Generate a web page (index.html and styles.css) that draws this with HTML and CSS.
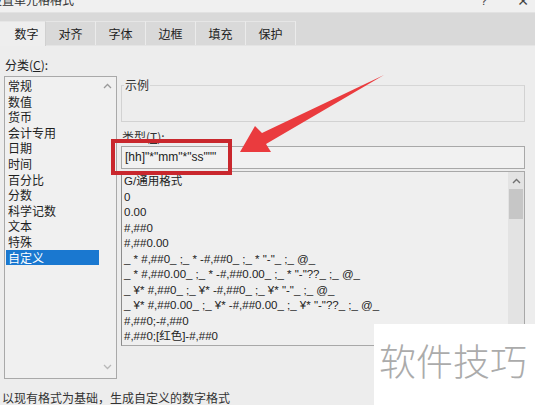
FILE: index.html
```html
<!DOCTYPE html>
<html lang="zh">
<head>
<meta charset="utf-8">
<link rel="stylesheet" href="styles.css">
</head>
<body>
<div class="dialog">
  <div class="titlebar">
    <span class="title">设置单元格格式</span>
    <span class="tb-btns"><span class="help">?</span><span class="close">✕</span></span>
  </div>
  <div class="tabstrip">
    <div class="tab active">数字</div>
    <div class="tab">对齐</div>
    <div class="tab">字体</div>
    <div class="tab">边框</div>
    <div class="tab">填充</div>
    <div class="tab">保护</div>
  </div>
  <div class="content">
    <div class="leftcol">
      <div class="label">分类(<u>C</u>):</div>
      <div class="catlist">
        <div class="items">
          <div class="item">常规</div>
          <div class="item">数值</div>
          <div class="item">货币</div>
          <div class="item">会计专用</div>
          <div class="item">日期</div>
          <div class="item">时间</div>
          <div class="item">百分比</div>
          <div class="item">分数</div>
          <div class="item">科学记数</div>
          <div class="item">文本</div>
          <div class="item">特殊</div>
          <div class="item sel">自定义</div>
        </div>
        <div class="lscroll">
          <svg width="9" height="6" viewBox="0 0 9 6"><path d="M1 5 L4.5 1.5 L8 5" fill="none" stroke="#9a9a9a" stroke-width="1.3"/></svg>
          <svg width="9" height="6" viewBox="0 0 9 6"><path d="M1 1 L4.5 4.5 L8 1" fill="none" stroke="#b8b8b8" stroke-width="1.3"/></svg>
        </div>
      </div>
    </div>
    <div class="rightcol">
      <fieldset class="sample">
        <legend>示例</legend>
      </fieldset>
      <div class="label typelabel">类型(<u>T</u>):</div>
      <div class="typeinput">[hh]"*"mm"*"ss"""</div>
      <div class="fmtlist">
        <div class="fitems">
          <div class="fitem">G/通用格式</div>
          <div class="fitem">0</div>
          <div class="fitem">0.00</div>
          <div class="fitem">#,##0</div>
          <div class="fitem">#,##0.00</div>
          <div class="fitem">_ * #,##0_ ;_ * -#,##0_ ;_ * "-"_ ;_ @_</div>
          <div class="fitem">_ * #,##0.00_ ;_ * -#,##0.00_ ;_ * "-"??_ ;_ @_</div>
          <div class="fitem">_ ¥* #,##0_ ;_ ¥* -#,##0_ ;_ ¥* "-"_ ;_ @_</div>
          <div class="fitem">_ ¥* #,##0.00_ ;_ ¥* -#,##0.00_ ;_ ¥* "-"??_ ;_ @_</div>
          <div class="fitem">#,##0;-#,##0</div>
          <div class="fitem">#,##0;[红色]-#,##0</div>
        </div>
        <div class="rscroll">
          <div class="rarrow"><svg width="9" height="6" viewBox="0 0 9 6"><path d="M1 5 L4.5 1.5 L8 5" fill="none" stroke="#707070" stroke-width="1.4"/></svg></div>
          <div class="thumb"></div>
        </div>
      </div>
    </div>
  </div>
  <div class="footer">以现有格式为基础，生成自定义的数字格式</div>

  <div class="redbox"></div>
  <svg class="arrow" width="535" height="405" viewBox="0 0 535 405">
    <polygon points="240,152 255,126 262,133 384,75 266,144 271,152" fill="#ea3b3e"/>
  </svg>
  <div class="watermark">软件技巧</div>
</div>
</body>
</html>
```

FILE: styles.css
```css
* { box-sizing: border-box; }
html, body {
  margin: 0;
  padding: 0;
  width: 535px;
  height: 405px;
  overflow: hidden;
  background: #ededed;
}
body {
  font-family: "Noto Sans CJK SC", "Liberation Sans", sans-serif;
  font-size: 12px;
  color: #1e1e1e;
}
.dialog {
  position: relative;
  width: 535px;
  height: 405px;
  overflow: hidden;
  background: #ededed;
}
.titlebar {
  height: 12px;
  background: #f0f0f0;
  display: flex;
  justify-content: space-between;
  overflow: hidden;
}
.title {
  margin-top: -8px;
  margin-left: -10px;
  line-height: 16px;
  font-size: 12px;
  color: #333;
}
.tb-btns {
  display: flex;
  margin-top: -7px;
  line-height: 16px;
  color: #444;
}
.help { margin-right: 30px; font-size: 12px; font-family: "Liberation Sans", sans-serif; }
.close { margin-right: 6px; font-size: 14px; font-family: "DejaVu Sans", sans-serif; }
.tabstrip {
  height: 34px;
  background: #d9d9d9;
  display: flex;
  align-items: flex-end;
  border-top: 1px solid #e2e2e2;
  border-bottom: 1px solid #e4e4e4;
}
.tab {
  width: 50px;
  height: 24px;
  line-height: 23px;
  text-align: center;
  border-right: 1px solid #ebebeb;
  border-top: 1px solid #e6e6e6;
  color: #222;
  font-size: 12px;
}
.tab.active {
  width: 46px;
  height: 25px;
  margin-bottom: -1px;
  background: #eeeeee;
  padding-left: 8px;
  border-right: 1px solid #d0d0d0;
}
.content {
  display: flex;
  height: 333px;
}
.leftcol {
  width: 121px;
  padding-left: 4px;
  padding-top: 11px;
}
.label {
  line-height: 16px;
  padding-left: 1px;
  color: #222;
}
.label u { text-decoration: underline; }
.catlist {
  margin-top: 3px;
  width: 113px;
  height: 303px;
  border: 1px solid #a9a9a9;
  background: #f0f0f0;
  display: flex;
}
.items {
  flex: 1;
  padding-top: 1px;
  padding-left: 1px;
}
.item {
  height: 15.6px;
  line-height: 15.6px;
  padding-left: 2px;
}
.item.sel {
  background: #1a78d0;
  color: #fff;
}
.lscroll {
  width: 17px;
  display: flex;
  flex-direction: column;
  justify-content: space-between;
  align-items: center;
  padding: 6px 0 8px;
}
.rightcol {
  width: 404px;
  padding-top: 32px;
}
.sample {
  margin: 0;
  padding: 0;
  height: 44px;
  border: 1px solid #d2d2d2;
  border-top-color: #d6d6d6;
  min-width: 0;
}
.sample legend {
  padding: 0 1px;
  margin-left: 2px;
  line-height: 14px;
  color: #333;
}
.typelabel {
  margin-top: 7px;
  color: #333;
}
.typeinput {
  margin-top: 1px;
  height: 23px;
  border: 1px solid #a8a8a8;
  background: #f1f1f1;
  line-height: 21px;
  padding-left: 3px;
  font-family: "Liberation Sans", sans-serif;
  font-size: 12px;
  color: #222;
}
.fmtlist {
  margin-top: 2px;
  height: 175px;
  border: 1px solid #a8a8a8;
  border-left-color: #8c8c8c;
  background: #efefef;
  display: flex;
  overflow: hidden;
}
.fitems {
  flex: 1;
  padding-top: 2px;
  padding-left: 2px;
}
.fitem {
  height: 15.5px;
  line-height: 15.5px;
  white-space: nowrap;
  font-family: "Liberation Sans", "Noto Sans CJK SC", sans-serif;
  font-size: 11.5px;
  color: #222;
}
.rscroll {
  width: 16px;
  background: #e3e3e3;
  display: flex;
  flex-direction: column;
  align-items: center;
}
.rarrow {
  height: 17px;
  display: flex;
  align-items: center;
}
.thumb {
  width: 14px;
  height: 30px;
  background: #c6c6c6;
}
.footer {
  padding-left: 2px;
  margin-top: 11px;
  line-height: 16px;
  color: #333;
}
.redbox {
  position: absolute;
  left: 111px;
  top: 139px;
  width: 121px;
  height: 36px;
  border: 4px solid #c9272d;
}
.arrow {
  position: absolute;
  left: 0;
  top: 0;
}
.watermark {
  position: absolute;
  left: 374px;
  top: 324px;
  width: 161px;
  height: 81px;
  background: #ffffff;
  color: #ababab;
  font-size: 37px;
  line-height: 40px;
  padding-top: 16px;
  padding-left: 5px;
  font-weight: 300;
  white-space: nowrap;
}
```
